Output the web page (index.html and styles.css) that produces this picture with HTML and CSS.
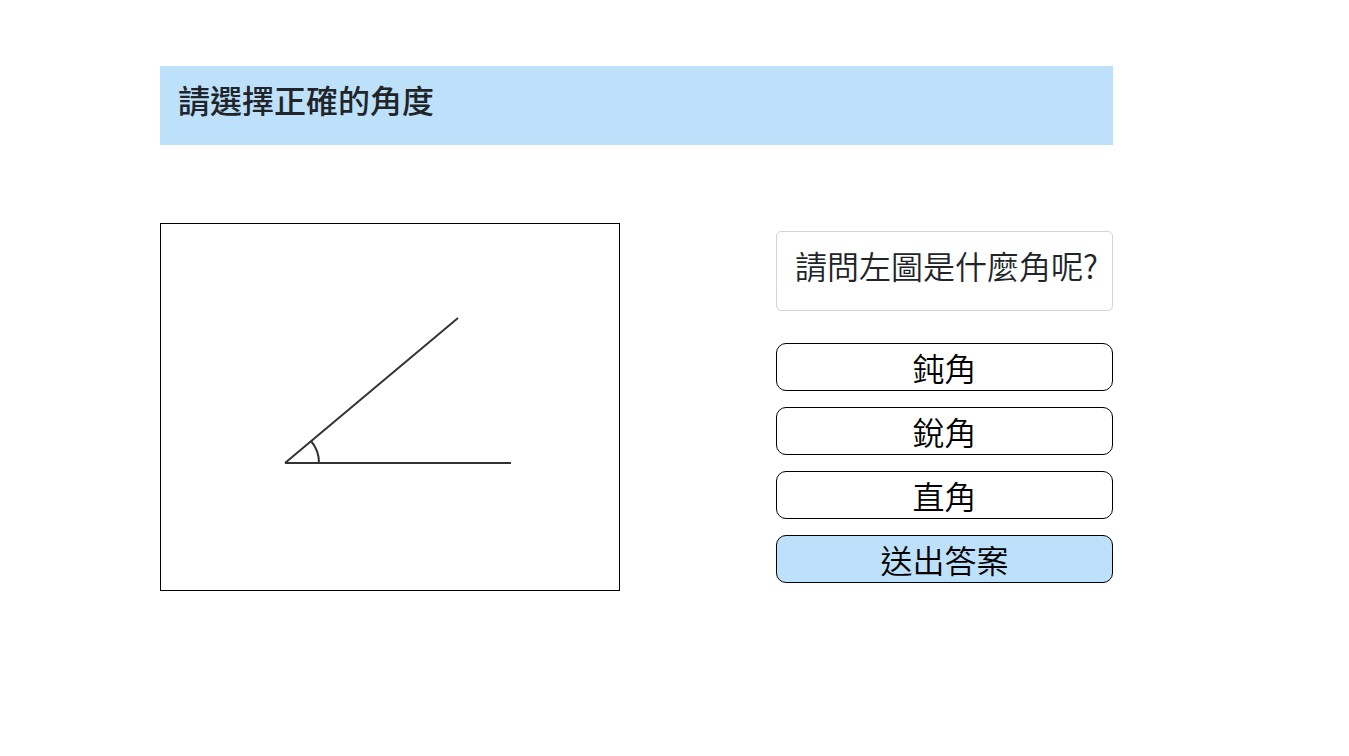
FILE: index.html
```html
<!DOCTYPE html>
<html lang="zh-Hant">
<head>
<meta charset="utf-8">
<title>請選擇正確的角度</title>
<link rel="stylesheet" href="styles.css">
</head>
<body>
<div class="page">
  <header class="title-bar">
    <h1 class="title">請選擇正確的角度</h1>
  </header>
  <main class="content">
    <div class="canvas">
      <svg class="angle" width="458" height="366" viewBox="0 0 458 366">
        <g transform="translate(-161,-224)" fill="none" stroke="#333" stroke-width="2">
          <line x1="285" y1="463" x2="511" y2="463"/>
          <line x1="285" y1="463" x2="458" y2="318"/>
          <path d="M319 463 A34 34 0 0 0 311 441"/>
        </g>
      </svg>
    </div>
    <div class="panel">
      <div class="question">請問左圖是什麼角呢?</div>
      <button class="option">鈍角</button>
      <button class="option">銳角</button>
      <button class="option">直角</button>
      <button class="option submit">送出答案</button>
    </div>
  </main>
</div>
</body>
</html>
```
FILE: styles.css
```css
html, body {
  margin: 0;
  padding: 0;
  background: #fff;
}
body {
  font-family: "Noto Sans CJK TC", "Noto Sans", sans-serif;
  color: #222;
}
.page {
  width: 953px;
  margin-left: 160px;
  padding-top: 66px;
}
.title-bar {
  background: #bde0fb;
  height: 79px;
  display: flex;
  align-items: center;
  padding-left: 18px;
  box-sizing: border-box;
}
.title {
  margin: 0;
  font-size: 32px;
  font-weight: 500;
  color: #212529;
  line-height: 1;
  position: relative;
  top: -7px;
}
.content {
  display: flex;
  justify-content: space-between;
  margin-top: 78px;
}
.canvas {
  width: 460px;
  height: 368px;
  border: 1px solid #000;
  box-sizing: border-box;
}
.angle {
  display: block;
}
.panel {
  width: 337px;
  display: flex;
  flex-direction: column;
  gap: 16px;
  padding-top: 8px;
}
.question {
  height: 80px;
  box-sizing: border-box;
  border: 1px solid #d4d4d4;
  border-radius: 5px;
  padding-left: 18px;
  padding-bottom: 12px;
  display: flex;
  align-items: center;
  font-size: 32px;
  font-weight: 350;
  color: #212529;
  margin-bottom: 16px;
}
.option {
  height: 48px;
  box-sizing: border-box;
  border: 1px solid #000;
  border-radius: 10px;
  background: #fff;
  font-family: inherit;
  font-size: 32px;
  font-weight: 350;
  color: #000;
  padding: 0;
  line-height: 1;
  cursor: pointer;
}
.submit {
  background: #bde0fb;
}
```
